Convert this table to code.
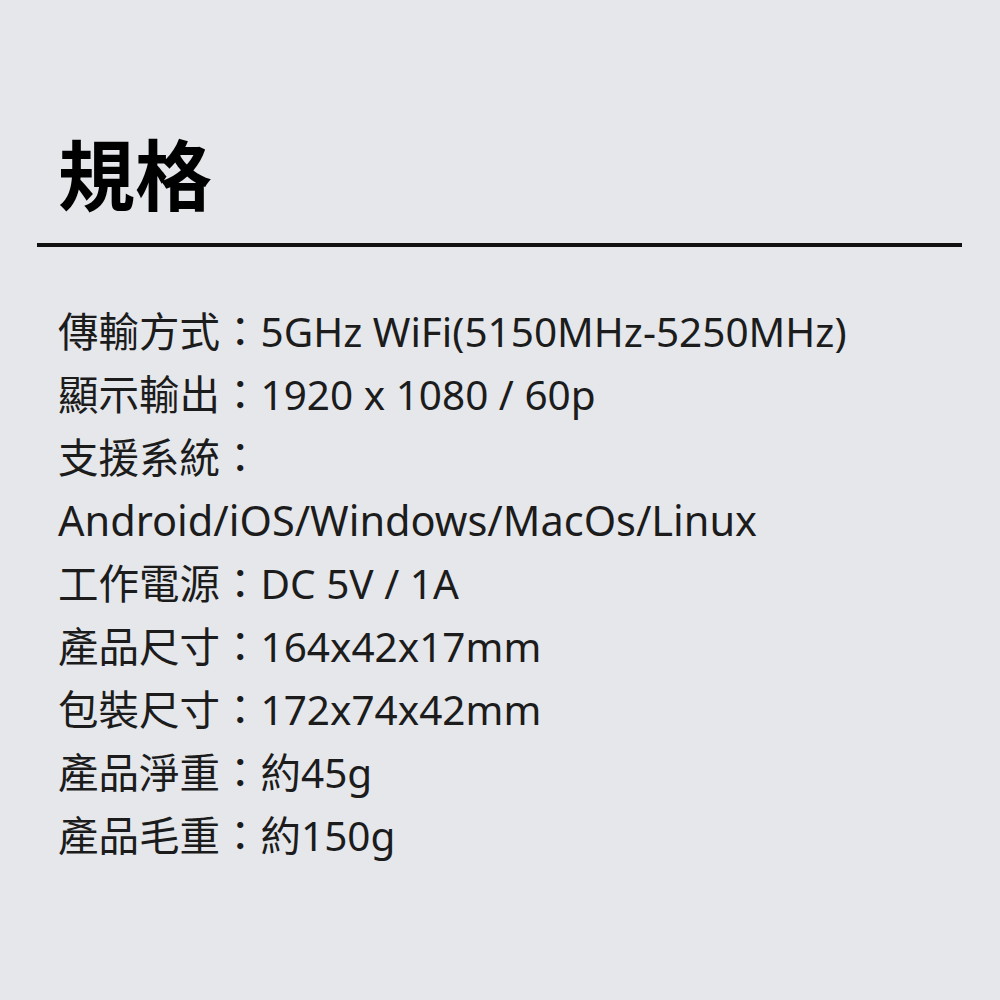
import React from 'react';

const specs: { text: string; wide?: boolean }[] = [
  { text: '傳輸方式：5GHz WiFi(5150MHz-5250MHz)' },
  { text: '顯示輸出：1920 x 1080 / 60p' },
  { text: '支援系統：' },
  { text: 'Android/iOS/Windows/MacOs/Linux', wide: true },
  { text: '工作電源：DC 5V / 1A' },
  { text: '產品尺寸：164x42x17mm' },
  { text: '包裝尺寸：172x74x42mm' },
  { text: '產品淨重：約45g' },
  { text: '產品毛重：約150g' },
];

export default function App() {
  return (
    <div
      className="w-[1000px] h-[1000px] bg-[#e5e7eb] overflow-hidden"
      style={{ fontFamily: '"Noto Sans", "Noto Sans CJK TC", sans-serif' }}
    >
      <div className="pt-[133px] pl-[58px]">
        <h1 className="text-[77px] leading-[86px] font-bold text-black">規格</h1>
      </div>
      <div className="mx-[37px] mt-[24px] h-[4px] w-[925px] bg-[#111]" />
      <div className="pl-[58px] pt-[53px] text-[40.5px] leading-[63px] text-[#1c1c1c]">
        {specs.map(s => (
          <div key={s.text} className={s.wide ? 'text-[41.5px]' : ''}>
            {s.text}
          </div>
        ))}
      </div>
    </div>
  );
}
